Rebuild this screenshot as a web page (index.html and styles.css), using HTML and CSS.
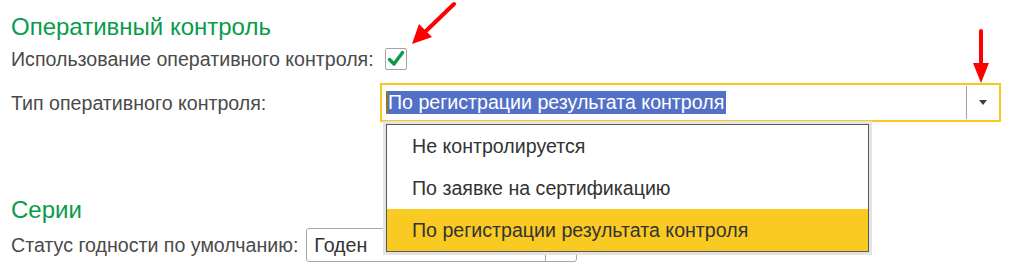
FILE: index.html
```html
<!DOCTYPE html>
<html lang="ru">
<head>
<meta charset="utf-8">
<link rel="stylesheet" href="styles.css">
</head>
<body>
<div class="page">
  <h2 class="group-title first">Оперативный контроль</h2>
  <div class="row row-check">
    <span class="label label-wide">Использование оперативного контроля:</span>
    <span class="checkbox">
      <svg width="20" height="20" viewBox="0 0 20 20"><path d="M3.5 10.5 L8 15 L16.5 3.5" fill="none" stroke="#0a9a4a" stroke-width="3.4" stroke-linecap="round" stroke-linejoin="round"/></svg>
    </span>
  </div>
  <div class="row row-select">
    <span class="label label-col">Тип оперативного контроля:</span>
    <div class="select">
      <div class="select-value"><span class="caret"></span><span class="selected-text">По регистрации результата контроля</span></div>
      <div class="select-btn"><span class="tri"></span></div>
    </div>
  </div>
  <h2 class="group-title second">Серии</h2>
  <div class="row row-status">
    <span class="label">Статус годности по умолчанию:</span>
    <div class="input">
      <span class="input-value">Годен</span>
      <span class="input-btn"></span>
    </div>
  </div>

  <ul class="dropdown">
    <li class="item">Не контролируется</li>
    <li class="item">По заявке на сертификацию</li>
    <li class="item current">По регистрации результата контроля</li>
  </ul>

  <svg class="arrows" width="1014" height="277" viewBox="0 0 1014 277">
    <path d="M454 4 L426 31" stroke="#ff0000" stroke-width="4" stroke-linecap="round"/>
    <polygon points="412,44 432,37 419,24" fill="#ff0000"/>
    <path d="M981 31 L981 66" stroke="#ff0000" stroke-width="4" stroke-linecap="round"/>
    <polygon points="973,63 989,63 981,83" fill="#ff0000"/>
  </svg>
</div>
</body>
</html>
```
FILE: styles.css
```css
html, body {
  margin: 0;
  padding: 0;
  background: #ffffff;
}
body {
  width: 1014px;
  height: 277px;
  overflow: hidden;
  font-family: "Liberation Sans", Arial, sans-serif;
}
.page {
  position: relative;
  width: 1014px;
  height: 277px;
  padding-left: 11px;
  box-sizing: border-box;
}
.group-title {
  margin: 0;
  font-weight: normal;
  font-size: 24px;
  line-height: 28px;
  color: #099b4c;
}
.group-title.first { padding-top: 13px; }
.group-title.second { margin-top: 74px; }

.row {
  display: flex;
  align-items: center;
}
.label {
  font-size: 19.6px;
  line-height: 28px;
  color: #4a4a4a;
  white-space: nowrap;
}
.row-check {
  margin-top: 4px;
  height: 28px;
}
.label-wide { width: 374px; }
.checkbox {
  width: 20px;
  height: 20px;
  border: 1px solid #a4a4a4;
  border-radius: 2px;
  display: flex;
  align-items: center;
  justify-content: center;
}
.row-select {
  margin-top: 10px;
  height: 39px;
}
.label-col { width: 369px; }
.select {
  width: 621px;
  height: 39px;
  box-sizing: border-box;
  border: 2px solid #f8c81c;
  display: flex;
  align-items: center;
}
.select-value {
  flex: 1;
  display: flex;
  align-items: center;
  padding-left: 4px;
}
.caret {
  width: 2px;
  height: 23px;
  background: #8a7a20;
}
.selected-text {
  background: #5370c7;
  color: #ffffff;
  font-size: 19.6px;
  line-height: 23px;
  padding-right: 2px;
  white-space: nowrap;
}
.select-btn {
  width: 32px;
  height: 33px;
  border-left: 1px solid #a0a0a0;
  display: flex;
  align-items: center;
  justify-content: center;
}
.tri {
  width: 0;
  height: 0;
  border-left: 4px solid transparent;
  border-right: 4px solid transparent;
  border-top: 5px solid #404040;
}
.row-status {
  margin-top: 4px;
  height: 34px;
}
.row-status .label { margin-right: 8px; }
.input {
  width: 271px;
  height: 34px;
  box-sizing: border-box;
  border: 1px solid #a8a8a8;
  border-radius: 3px;
  display: flex;
  align-items: center;
}
.input-value {
  flex: 1;
  padding-left: 7px;
  font-size: 19.6px;
  color: #333333;
}
.input-btn {
  width: 30px;
  height: 32px;
  border-left: 1px solid #a8a8a8;
}

.dropdown {
  position: absolute;
  left: 383px;
  top: 121px;
  margin: 0;
  padding: 0;
  list-style: none;
  width: 481px;
  border: 1px solid #5a5a5a;
  box-shadow: 0 0 0 3px #e3e3e3;
  background: #ffffff;
  margin-left: 3px;
  margin-top: 3px;
}
.item {
  height: 42px;
  line-height: 42px;
  padding-left: 25px;
  font-size: 19.6px;
  color: #333333;
  white-space: nowrap;
}
.item.current {
  background: #f9ca22;
}
.arrows {
  position: absolute;
  left: 0;
  top: 0;
  pointer-events: none;
}
```
